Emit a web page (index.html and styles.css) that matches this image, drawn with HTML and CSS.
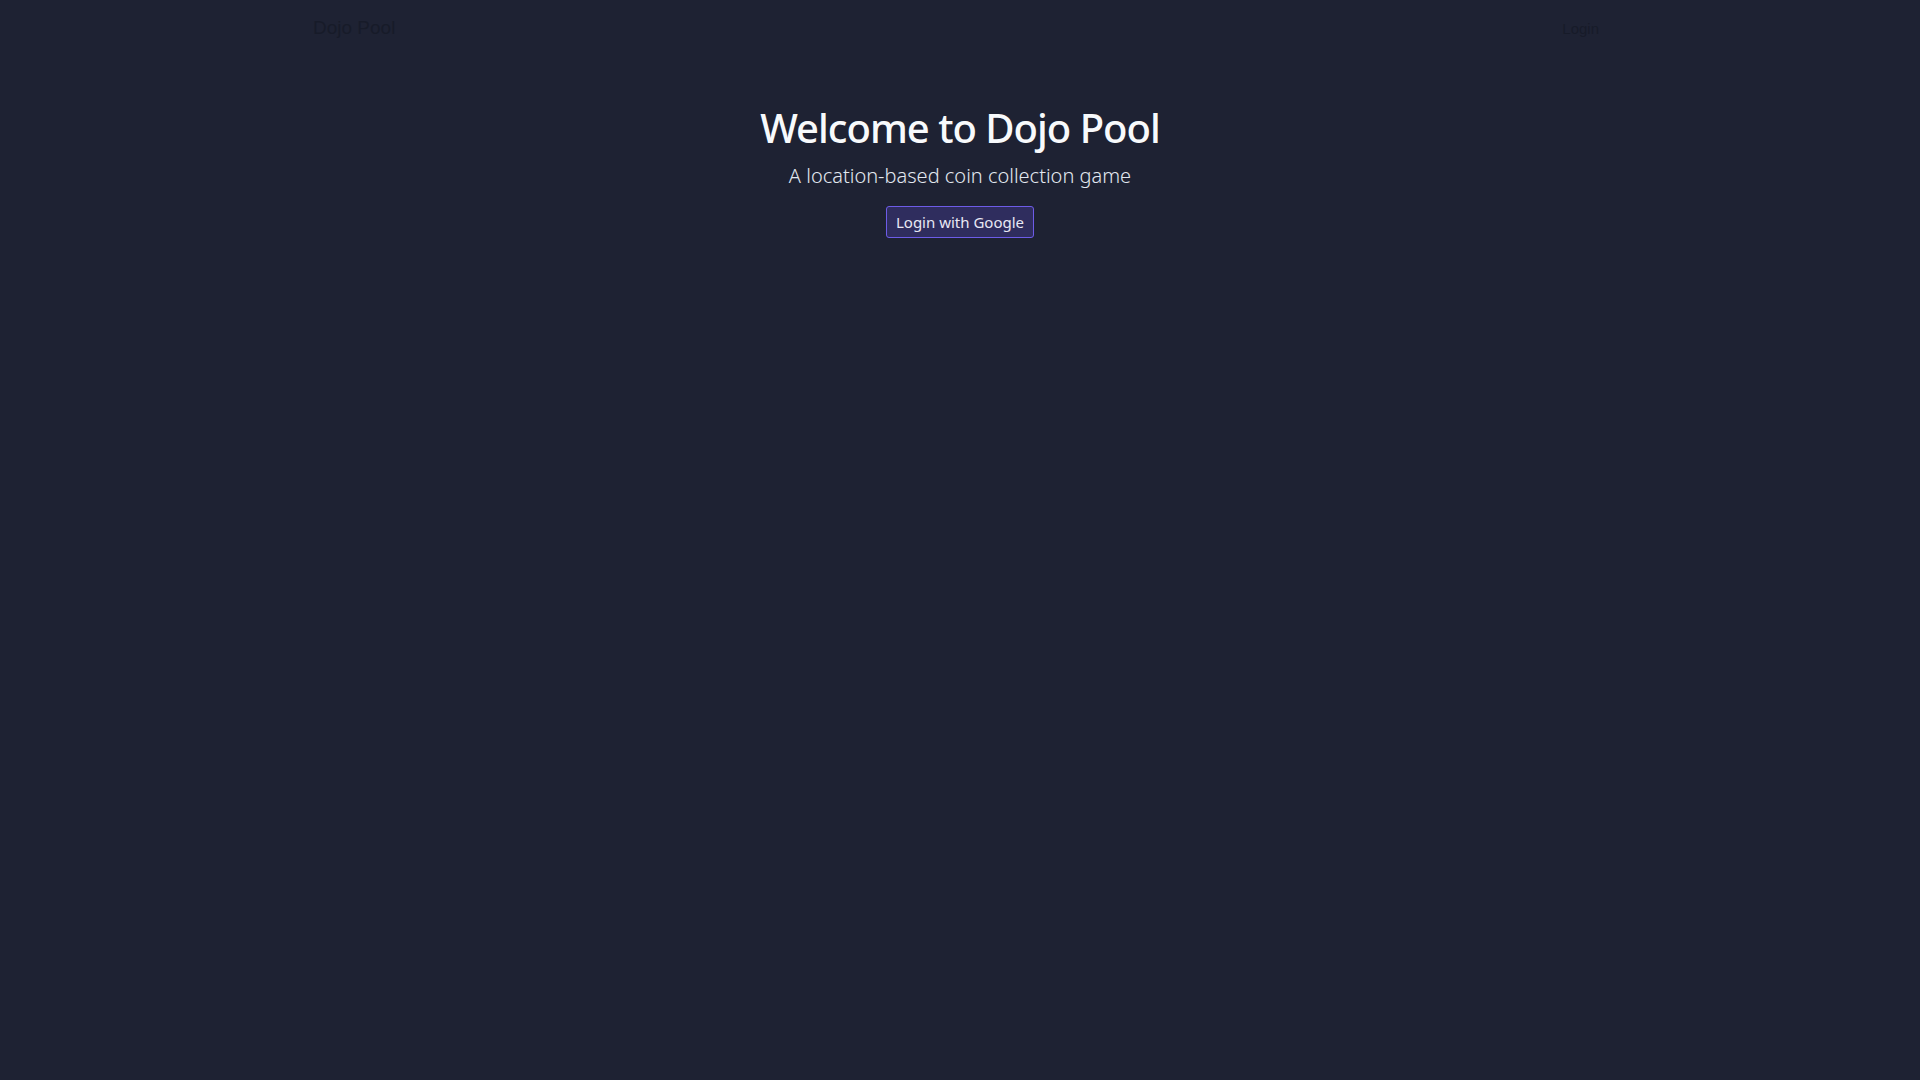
FILE: index.html
```html
<!DOCTYPE html>
<html lang="en">
<head>
<meta charset="utf-8">
<title>Dojo Pool</title>
<link rel="stylesheet" href="styles.css">
</head>
<body>
<header class="nav">
  <div class="nav-inner">
    <a class="brand" href="#">Dojo Pool</a>
    <a class="nav-link" href="#">Login</a>
  </div>
</header>
<main class="hero">
  <h1 class="title">Welcome to Dojo Pool</h1>
  <p class="subtitle">A location-based coin collection game</p>
  <button class="btn-google" type="button">Login with Google</button>
</main>
</body>
</html>
```
FILE: styles.css
```css
* { box-sizing: border-box; }
html, body { margin: 0; padding: 0; }
body {
  background: #1e2233;
  min-height: 100vh;
  font-family: "Noto Sans", "Open Sans", sans-serif;
  color: #f8fafc;
}
.nav { height: 56px; }
.nav-inner {
  width: 1296px;
  margin: 0 auto;
  height: 56px;
  padding: 0 0 0 1px;
  display: flex;
  align-items: center;
  justify-content: space-between;
}
.brand {
  font-family: "Liberation Sans", Arial, sans-serif;
  font-size: 19px;
  color: #171b29;
  text-decoration: none;
}
.nav-link {
  font-family: "Liberation Sans", Arial, sans-serif;
  font-size: 15px;
  color: #171b29;
  text-decoration: none;
  margin-right: 9px;
}
.hero {
  display: flex;
  flex-direction: column;
  align-items: center;
  padding-top: 48px;
}
.title {
  margin: 0;
  font-size: 40px;
  font-weight: 500;
  letter-spacing: -1px;
  line-height: 1.2;
  color: #f8fafc;
}
.subtitle {
  margin: 9px 0 0;
  font-size: 20px;
  font-weight: 300;
  line-height: 1.5;
  color: #e2e8f0;
}
.btn-google {
  margin-top: 15px;
  height: 32px;
  width: 148px;
  padding: 0;
  background: #2f2d5e;
  border: 1px solid #6d5ce8;
  border-radius: 3px;
  color: #e8e8f4;
  font-family: "Noto Sans", "Open Sans", sans-serif;
  font-size: 15px;
}
```
